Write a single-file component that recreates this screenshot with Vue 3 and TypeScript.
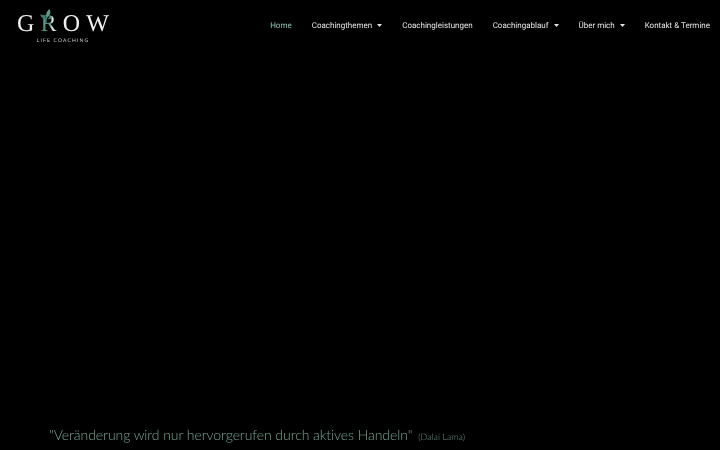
<script setup lang="ts">
interface NavItem {
  label: string
  caret?: boolean
  active?: boolean
}

const items: NavItem[] = [
  { label: 'Home', active: true },
  { label: 'Coachingthemen', caret: true },
  { label: 'Coachingleistungen' },
  { label: 'Coachingablauf', caret: true },
  { label: 'Über mich', caret: true },
  { label: 'Kontakt & Termine' },
]
</script>

<template>
  <div class="page">
    <header class="header">
      <a class="logo">
        <div class="word">
          <span>G</span>
          <span class="r-wrap">
            <span class="r">R</span>
            <svg class="leaf" width="14" height="14" viewBox="0 0 14 14">
              <path d="M7 14C6.500 11 7 9 8.500 7" stroke="#4f9582" stroke-width="1.300" fill="none" />
              <path d="M8 8C6.500 6 7 3 10.500 0C12 3 11.500 6 8 8Z" fill="#5a9c8a" />
              <path d="M7 10C5 10 2 8.500 1 5.500C4 5.500 6.500 7 7 10Z" fill="#3d7f6e" />
              <path d="M9 10C9.500 8.500 11 7.500 13.500 7.500C13 9.500 11 10.500 9 10Z" fill="#4a8c7a" />
            </svg>
          </span>
          <span>O</span>
          <span>W</span>
        </div>
        <div class="tagline">LIFE COACHING</div>
      </a>
      <nav class="nav">
        <a v-for="item in items" :key="item.label" :class="['link', { active: item.active }]">
          {{ item.label }}
          <svg v-if="item.caret" class="caret" width="5" height="3" viewBox="0 0 5 3">
            <path d="M0 0H5L2.500 3Z" fill="#e6e6e6" />
          </svg>
        </a>
      </nav>
    </header>
    <main class="main">
      <p class="quote">
        "Veränderung wird nur hervorgerufen durch aktives Handeln"
        <span class="author">(Dalai Lama)</span>
      </p>
    </main>
  </div>
</template>

<style>
html,
body {
  margin: 0;
  background: #000;
}
</style>

<style scoped>
.page {
  width: 720px;
  height: 450px;
  overflow: hidden;
  background: #000;
  display: flex;
  flex-direction: column;
  text-rendering: geometricPrecision;
}
.header {
  display: flex;
  justify-content: space-between;
  align-items: flex-start;
  padding: 12px 10px 0 17px;
  filter: blur(0.3px);
}
.logo {
  display: flex;
  flex-direction: column;
  align-items: center;
  width: 92px;
}
.word {
  display: flex;
  justify-content: space-between;
  width: 100%;
  font-family: "Liberation Serif", serif;
  font-size: 24px;
  line-height: 24px;
  color: #f0f0f0;
}
.r-wrap {
  position: relative;
}
.r {
  background: linear-gradient(90deg, #4f9582 0 55%, #e6e6e6 70%);
  -webkit-background-clip: text;
  background-clip: text;
  color: transparent;
}
.leaf {
  position: absolute;
  left: -2px;
  top: -3px;
}
.tagline {
  margin-top: 2px;
  font-family: "Lato", sans-serif;
  font-size: 5px;
  line-height: 7px;
  letter-spacing: 1.150px;
  color: #d0d0d0;
}
.nav {
  display: flex;
  gap: 20px;
  padding-top: 8px;
}
.link {
  display: flex;
  align-items: center;
  gap: 5px;
  font-family: "Roboto", sans-serif;
  font-size: 8px;
  line-height: 12px;
  color: #e6e6e6;
  white-space: nowrap;
}
.link.active {
  color: #8cc4b2;
}
.caret {
  margin-top: -1px;
}
.main {
  flex: 1;
  display: flex;
  align-items: flex-end;
  padding: 0 0 4px 49px;
}
.quote {
  margin: 0;
  font-family: "Lato", sans-serif;
  font-size: 14px;
  font-weight: 300;
  letter-spacing: -0.07px;
  line-height: 18px;
  color: #74a898;
  filter: blur(0.3px);
}
.author {
  margin-left: 2px;
  font-size: 9px;
  letter-spacing: 0;
  color: #6a9a8c;
}
</style>
